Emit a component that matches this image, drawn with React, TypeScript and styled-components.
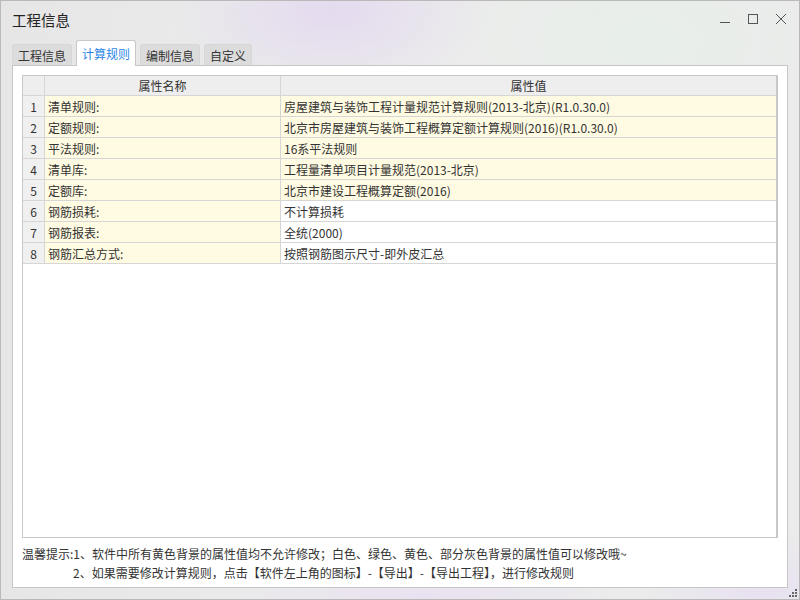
import React from "react";
import styled, { createGlobalStyle } from "styled-components";

const GlobalStyle = createGlobalStyle`
  html, body {
    margin: 0;
    padding: 0;
    background: #e8e8e8;
  }
  * {
    box-sizing: border-box;
  }
`;

const Window = styled.div`
  width: 800px;
  height: 600px;
  border: 1px solid #b9b9b9;
  display: flex;
  flex-direction: column;
  position: relative;
  font-family: "Microsoft YaHei", "Noto Sans CJK SC", "Noto Sans", sans-serif;
  color: #333;
  background:
    radial-gradient(ellipse 160px 90px at 330px 10px, rgba(226, 214, 240, 0.8), transparent),
    radial-gradient(ellipse 200px 120px at 640px 40px, rgba(230, 240, 232, 0.7), transparent),
    radial-gradient(ellipse 200px 60px at 420px 600px, rgba(232, 222, 242, 0.8), transparent),
    radial-gradient(ellipse 120px 60px at 760px 590px, rgba(232, 224, 242, 0.9), transparent),
    linear-gradient(90deg, #e6e6e6, #ececec 40%, #ebebeb);
`;

const TitleBar = styled.div`
  height: 39px;
  display: flex;
  align-items: center;
  padding: 0 0 0 11px;
`;

const Title = styled.div`
  flex: 1;
  font-size: 14.5px;
  color: #222;
  margin-top: -2px;
`;

const WinButtons = styled.div`
  display: flex;
  align-items: center;
  margin-top: -3px;
  margin-right: 4px;
`;

const WinButton = styled.div`
  width: 28px;
  height: 24px;
  display: flex;
  align-items: center;
  justify-content: center;
  svg {
    display: block;
  }
`;

const TabRow = styled.div`
  display: flex;
  align-items: flex-end;
  gap: 4px;
  height: 25px;
  padding-left: 11px;
  position: relative;
  z-index: 1;
`;

const Tab = styled.div<{ $active?: boolean }>`
  height: ${(p) => (p.$active ? "26px" : "21px")};
  padding: 0 5px;
  display: flex;
  align-items: center;
  font-size: 12px;
  color: ${(p) => (p.$active ? "#2b86e8" : "#333")};
  background: ${(p) => (p.$active ? "#ffffff" : "#dcdcdc")};
  border: 1px solid ${(p) => (p.$active ? "#c8c8c8" : "#d6d6d6")};
  border-bottom: none;
  border-radius: 3px 3px 0 0;
  margin-bottom: ${(p) => (p.$active ? "-1px" : "0")};
  padding-bottom: ${(p) => (p.$active ? "1px" : "0")};
`;

const Panel = styled.div`
  margin: 0 11px 11px 11px;
  flex: 1;
  background: #fff;
  border: 1px solid #c6c6c6;
  padding: 9px 9px 0 9px;
  display: flex;
  flex-direction: column;
`;

const Grid = styled.div`
  height: 463px;
  border: 1px solid #c8c8c8;
  border-right-width: 2px;
  background: #fff;
`;

const Row = styled.div`
  display: grid;
  grid-template-columns: 22px 236px 1fr;
  font-size: 12px;
`;

const Cell = styled.div<{ $bg?: string; $center?: boolean; $h?: number }>`
  height: ${(p) => p.$h ?? 21}px;
  border-right: 1px solid #d6d6d6;
  border-bottom: 1px solid #d6d6d6;
  background: ${(p) => p.$bg ?? "#fff"};
  display: flex;
  align-items: center;
  justify-content: ${(p) => (p.$center ? "center" : "flex-start")};
  padding-left: ${(p) => (p.$center ? "0" : "3px")};
  white-space: nowrap;
  overflow: hidden;
  &:last-child {
    border-right: none;
  }
`;

const Notes = styled.div`
  font-size: 12px;
  color: #333;
  padding-top: 6px;
  line-height: 19px;
`;

const NoteLine = styled.div<{ $indent?: number }>`
  padding-left: ${(p) => p.$indent ?? 0}px;
  white-space: nowrap;
`;

const Grip = styled.svg`
  position: absolute;
  right: 1px;
  bottom: 1px;
`;

const HEAD = "#eeeeee";
const NUM = "#f0f0f0";
const YELLOW = "#fffbe2";

const rows = [
  { name: "清单规则:", value: "房屋建筑与装饰工程计量规范计算规则(2013-北京)(R1.0.30.0)", locked: true },
  { name: "定额规则:", value: "北京市房屋建筑与装饰工程概算定额计算规则(2016)(R1.0.30.0)", locked: true },
  { name: "平法规则:", value: "16系平法规则", locked: true },
  { name: "清单库:", value: "工程量清单项目计量规范(2013-北京)", locked: true },
  { name: "定额库:", value: "北京市建设工程概算定额(2016)", locked: true },
  { name: "钢筋损耗:", value: "不计算损耗", locked: false },
  { name: "钢筋报表:", value: "全统(2000)", locked: false },
  { name: "钢筋汇总方式:", value: "按照钢筋图示尺寸-即外皮汇总", locked: false },
];

const tabs = ["工程信息", "计算规则", "编制信息", "自定义"];

export default function App() {
  return (
    <>
      <GlobalStyle />
      <Window>
        <TitleBar>
          <Title>工程信息</Title>
          <WinButtons>
            <WinButton>
              <svg width="12" height="12" viewBox="0 0 12 12">
                <path d="M1 9.5H11" stroke="#555" strokeWidth="1" />
              </svg>
            </WinButton>
            <WinButton>
              <svg width="12" height="12" viewBox="0 0 12 12">
                <rect x="1.5" y="1.5" width="9" height="9" fill="none" stroke="#555" strokeWidth="1" />
              </svg>
            </WinButton>
            <WinButton>
              <svg width="12" height="12" viewBox="0 0 12 12">
                <path d="M1 1L11 11M11 1L1 11" stroke="#555" strokeWidth="1" />
              </svg>
            </WinButton>
          </WinButtons>
        </TitleBar>
        <TabRow>
          {tabs.map((t, i) => (
            <Tab key={t} $active={i === 1}>
              {t}
            </Tab>
          ))}
        </TabRow>
        <Panel>
          <Grid>
            <Row>
              <Cell $bg={HEAD} $h={20} />
              <Cell $bg={HEAD} $h={20} $center>
                属性名称
              </Cell>
              <Cell $bg={HEAD} $h={20} $center>
                属性值
              </Cell>
            </Row>
            {rows.map((r, i) => (
              <Row key={r.name}>
                <Cell $bg={NUM} $center>
                  {i + 1}
                </Cell>
                <Cell $bg={YELLOW}>{r.name}</Cell>
                <Cell $bg={r.locked ? YELLOW : "#fff"}>{r.value}</Cell>
              </Row>
            ))}
          </Grid>
          <Notes>
            <NoteLine>
              温馨提示:1、软件中所有黄色背景的属性值均不允许修改；白色、绿色、黄色、部分灰色背景的属性值可以修改哦~
            </NoteLine>
            <NoteLine $indent={51}>
              2、如果需要修改计算规则，点击【软件左上角的图标】-【导出】-【导出工程】，进行修改规则
            </NoteLine>
          </Notes>
        </Panel>
        <Grip width="10" height="10" viewBox="0 0 10 10">
          <rect x="7" y="1" width="2" height="2" fill="#666" />
          <rect x="4" y="4" width="2" height="2" fill="#666" />
          <rect x="7" y="4" width="2" height="2" fill="#666" />
          <rect x="1" y="7" width="2" height="2" fill="#666" />
          <rect x="4" y="7" width="2" height="2" fill="#666" />
          <rect x="7" y="7" width="2" height="2" fill="#666" />
        </Grip>
      </Window>
    </>
  );
}
